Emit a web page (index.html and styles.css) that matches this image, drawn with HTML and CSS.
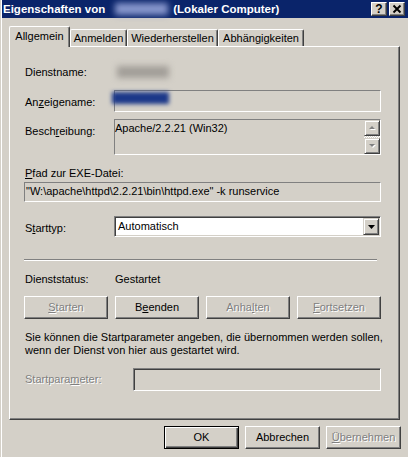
FILE: index.html
```html
<!DOCTYPE html>
<html lang="de">
<head>
<meta charset="utf-8">
<title>Eigenschaften von (Lokaler Computer)</title>
<link rel="stylesheet" href="styles.css">
</head>
<body>
<div class="window">
  <div class="titlebar">
    <span class="title">Eigenschaften von</span>
    <span class="redact"><span class="redact-blob"></span></span>
    <span class="title">(Lokaler Computer)</span>
    <div class="caption-btns">
      <span class="cap-btn">?</span>
      <span class="cap-btn"><svg width="14" height="12" viewBox="0 0 14 12"><path d="M3.5 2.5 L10.5 9.5 M10.5 2.5 L3.5 9.5" stroke="#000" stroke-width="1.9" fill="none"/></svg></span>
    </div>
  </div>
  <div class="content">
    <div class="tabs">
      <div class="tab active t1">Allgemein</div>
      <div class="tab t2">Anmelden</div>
      <div class="tab t3">Wiederherstellen</div>
      <div class="tab t4">Abhängigkeiten</div>
    </div>
    <div class="panel">
      <div class="row row-dn">
        <span class="lbl">Dienstname:</span>
        <span class="val"><span class="blur-gray"></span></span>
      </div>
      <div class="row row-az">
        <span class="lbl">An<u>z</u>eigename:</span>
        <div class="field az-field"><span class="blur-blue"></span></div>
      </div>
      <div class="row row-bs">
        <span class="lbl">Besch<u>r</u>eibung:</span>
        <div class="field desc">
          <div class="desc-text">Apache/2.2.21 (Win32)</div>
          <div class="scroll">
            <div class="sb-btn"><svg width="9" height="6" viewBox="0 0 9 6"><path d="M2 5 L8 5 L5 2 Z" fill="#fff"/><path d="M1 4 L7 4 L4 1 Z" fill="#808080"/></svg></div>
            <div class="sb-track"></div>
            <div class="sb-btn"><svg width="9" height="6" viewBox="0 0 9 6"><path d="M2 2 L8 2 L5 5 Z" fill="#fff"/><path d="M1 1 L7 1 L4 4 Z" fill="#808080"/></svg></div>
          </div>
        </div>
      </div>
      <div class="lbl-pfad"><u>P</u>fad zur EXE-Datei:</div>
      <div class="field path">"W:\apache\httpd\2.2.21\bin\httpd.exe" -k runservice</div>
      <div class="row row-st">
        <span class="lbl">S<u>t</u>arttyp:</span>
        <div class="combo">
          <span class="combo-text">Automatisch</span>
          <span class="combo-btn"><svg width="7" height="4" viewBox="0 0 7 4"><path d="M0 0 L7 0 L3.5 4 Z" fill="#000"/></svg></span>
        </div>
      </div>
      <div class="sep"></div>
      <div class="row row-ds">
        <span class="lbl">Dienststatus:</span>
        <span class="val status">Gestartet</span>
      </div>
      <div class="btns">
        <span class="btn dis"><u>S</u>tarten</span>
        <span class="btn">B<u>e</u>enden</span>
        <span class="btn dis">Anha<u>l</u>ten</span>
        <span class="btn dis"><u>F</u>ortsetzen</span>
      </div>
      <p class="note">Sie können die Startparameter angeben, die übernommen werden sollen,<br>wenn der Dienst von hier aus gestartet wird.</p>
      <div class="row row-sp">
        <span class="lbl dis">Startpara<u>m</u>eter:</span>
        <div class="sp-field"></div>
      </div>
    </div>
    <div class="footer">
      <span class="btn fbtn default">OK</span>
      <span class="btn fbtn">Abbrechen</span>
      <span class="btn fbtn dis"><u>Ü</u>bernehmen</span>
    </div>
  </div>
</div>
</body>
</html>
```
FILE: styles.css
```css
* { box-sizing: border-box; }
html, body { margin: 0; padding: 0; }
body {
  width: 408px;
  height: 457px;
  overflow: hidden;
  background: #d4d0c8;
  font-family: "Liberation Sans", Arial, sans-serif;
  font-size: 11px;
  color: #000;
}
u { text-decoration: underline; text-underline-offset: 1px; }

.window {
  margin-left: 1px;
  border-left: 1px solid #fff;
  height: 457px;
  background: #d4d0c8;
}

/* title bar */
.titlebar {
  height: 18px;
  background: #0a246a;
  display: flex;
  align-items: center;
  padding: 0 3px 0 1px;
  color: #fff;
  font-weight: bold;
  font-size: 11.5px;
  white-space: nowrap;
}
.redact {
  display: block;
  position: relative;
  width: 63px;
  height: 18px;
  margin-left: 5px;
}
.redact-blob {
  position: absolute;
  left: 5px;
  top: 3px;
  width: 53px;
  height: 12px;
  background: #8796cc;
  filter: blur(3px);
}
.caption-btns {
  margin-left: auto;
  display: flex;
  gap: 2px;
}
.cap-btn {
  width: 16px;
  height: 14px;
  background: #d4d0c8;
  border: 1px solid;
  border-color: #fff #404040 #404040 #fff;
  box-shadow: inset -1px -1px #808080;
  display: flex;
  align-items: center;
  justify-content: center;
  color: #000;
  font-size: 12px;
  font-weight: bold;
  line-height: 12px;
}

/* content */
.content {
  padding: 8px 8px 0 7px;
}
.tabs {
  display: flex;
  align-items: flex-end;
  height: 20px;
}
.tab {
  height: 17px;
  border: 1px solid #fff;
  border-bottom: 0;
  border-right-color: #404040;
  box-shadow: inset -1px 0 #808080;
  border-radius: 2px 2px 0 0;
  text-align: center;
  padding-top: 1px;
  line-height: 14px;
  background: #d4d0c8;
  white-space: nowrap;
}
.tab.active {
  height: 21px;
  margin-bottom: -1px;
  padding-top: 2px;
  position: relative;
  z-index: 1;
}
.t1 { width: 61px; }
.t2 { width: 57px; }
.t3 { width: 91px; }
.t4 { width: 86px; }

.panel {
  height: 374px;
  border: 1px solid;
  border-color: #fff #404040 #404040 #fff;
  box-shadow: inset -1px -1px #808080;
  padding: 0 18px 0 14px;
  display: flex;
  flex-direction: column;
}
.row {
  display: grid;
  grid-template-columns: 90px 1fr;
}
.lbl {
  padding-left: 1px;
  padding-top: 5px;
  line-height: 14px;
  white-space: nowrap;
}
.field {
  border: 1px solid;
  border-color: #808080 #fff #fff #808080;
}

.row-dn { margin-top: 15px; height: 20px; }
.row-dn .lbl { padding-top: 3px; }
.val { position: relative; }
.blur-gray {
  position: absolute;
  left: 3px;
  top: 4px;
  width: 52px;
  height: 12px;
  background: #a29e98;
  filter: blur(3px);
}

.row-az { margin-top: 8px; }
.az-field { height: 22px; position: relative; }
.blur-blue {
  position: absolute;
  left: -3px;
  top: 1px;
  width: 57px;
  height: 12px;
  background: #1b3889;
  filter: blur(2px);
}

.row-bs { margin-top: 7px; }
.desc { height: 36px; display: flex; }
.desc-text {
  flex: 1;
  padding: 1px 0 0 0;
  line-height: 14px;
}
.scroll {
  width: 16px;
  display: flex;
  flex-direction: column;
}
.sb-btn {
  height: 16px;
  border: 1px solid;
  border-color: #d4d0c8 #404040 #404040 #d4d0c8;
  box-shadow: inset 1px 1px #fff, inset -1px -1px #808080;
  background: #d4d0c8;
  display: flex;
  align-items: center;
  justify-content: center;
}
.sb-track {
  height: 2px;
  background: repeating-conic-gradient(#fff 0 25%, #d4d0c8 0 50%) 0 0 / 2px 2px;
}

.lbl-pfad {
  margin-top: 11px;
  line-height: 14px;
  padding-left: 1px;
}
.path {
  margin-top: 2px;
  height: 20px;
  padding-left: 1px;
  line-height: 16px;
  white-space: nowrap;
}

.row-st { margin-top: 14px; }
.combo {
  height: 21px;
  border: 1px solid;
  border-color: #808080 #fff #fff #808080;
  box-shadow: inset 1px 1px #404040, inset -1px -1px #d4d0c8;
  background: #fff;
  display: flex;
  padding: 1px;
}
.combo-text {
  flex: 1;
  padding-left: 2px;
  line-height: 17px;
}
.combo-btn {
  width: 16px;
  height: 17px;
  border: 1px solid;
  border-color: #d4d0c8 #404040 #404040 #d4d0c8;
  box-shadow: inset 1px 1px #fff, inset -1px -1px #808080;
  background: #d4d0c8;
  display: flex;
  align-items: center;
  justify-content: center;
}

.sep {
  margin-top: 22px;
  height: 2px;
  width: 353px;
  border-top: 1px solid #808080;
  border-bottom: 1px solid #fff;
}

.row-ds { margin-top: 11px; }
.row-ds .lbl { padding-top: 0; }
.status { padding-left: 1px; line-height: 14px; }

.btns {
  margin-top: 10px;
  display: grid;
  grid-template-columns: repeat(4, 1fr);
  gap: 7px;
}
.btn {
  display: block;
  height: 23px;
  border: 1px solid;
  border-color: #fff #404040 #404040 #fff;
  box-shadow: inset -1px -1px #808080;
  background: #d4d0c8;
  text-align: center;
  line-height: 20px;
  white-space: nowrap;
}
.dis {
  color: #808080;
  text-shadow: 1px 1px 0 #fff;
}

.note {
  margin: 12px 0 0 1px;
  line-height: 13px;
  white-space: nowrap;
}

.row-sp {
  margin-top: 11px;
  grid-template-columns: 109px 1fr;
}
.row-sp .lbl { padding-top: 4px; }
.sp-field {
  height: 23px;
  border: 1px solid;
  border-color: #808080 #fff #fff #808080;
  box-shadow: inset 1px 1px #404040, inset -1px -1px #d4d0c8;
  background: #d4d0c8;
}

.footer {
  margin-top: 6px;
  margin-right: -1px;
  display: flex;
  justify-content: flex-end;
  gap: 6px;
}
.fbtn { width: 75px; }
.fbtn.default {
  border: 1px solid #000;
  box-shadow: inset 1px 1px #fff, inset -1px -1px #404040, inset -2px -2px #808080;
}
```
